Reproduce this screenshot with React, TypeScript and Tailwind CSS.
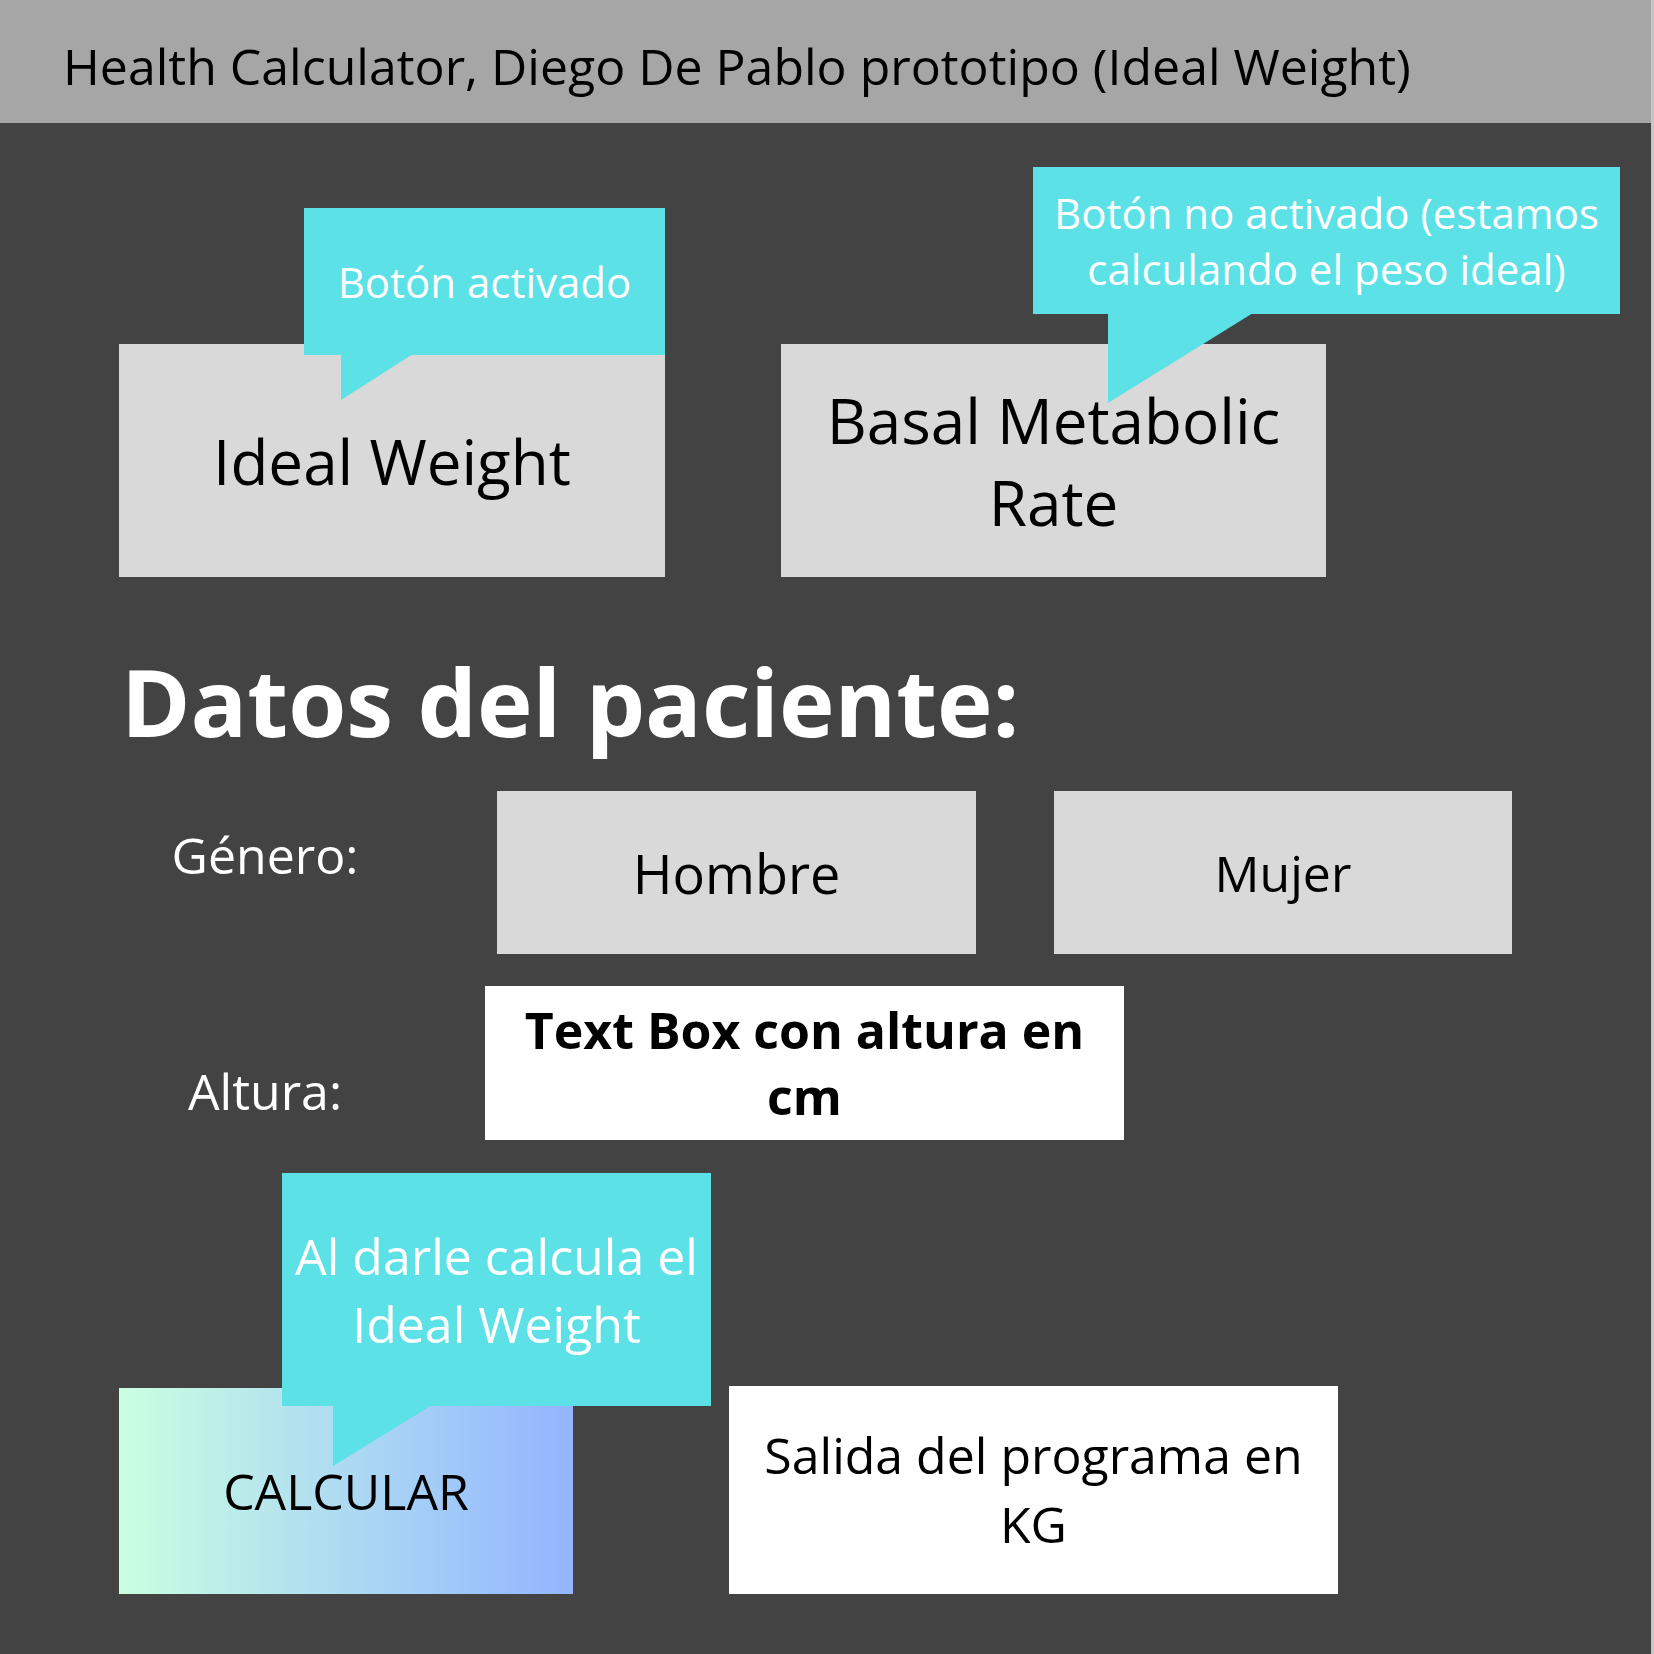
import React from "react";

function Callout({
  className,
  tail,
  w,
  h,
  children,
}: {
  className: string;
  tail: string;
  w: number;
  h: number;
  children: React.ReactNode;
}) {
  return (
    <div className={"absolute " + className}>
      <div className="relative w-full h-full bg-[#5ce1e6] flex items-center justify-center text-center text-white">
        {children}
        <svg
          className="absolute left-0 top-0 overflow-visible pointer-events-none"
          width={w}
          height={h}
        >
          <polygon points={tail} fill="#5ce1e6" />
        </svg>
      </div>
    </div>
  );
}

export default function App() {
  return (
    <div className="relative w-[1654px] h-[1654px] bg-[#434343] overflow-hidden border-r-[3px] border-[#c6c6c6] font-['Open_Sans',sans-serif] text-black">
      {/* header */}
      <div className="h-[123px] bg-[#a6a6a6] flex items-center pl-[63px] pt-[8px]">
        <span className="text-[50px] leading-none">
          Health Calculator, Diego De Pablo prototipo (Ideal Weight)
        </span>
      </div>

      <div className="pl-[119px]">
        {/* calculator selector */}
        <div className="flex gap-[116px] mt-[221px]">
          <div className="w-[546px] h-[233px] bg-[#d9d9d9] flex items-center justify-center text-[62px] leading-none">
            Ideal Weight
          </div>
          <div className="w-[545px] h-[233px] bg-[#d9d9d9] flex items-center justify-center text-center text-[62px] leading-[82px]">
            Basal Metabolic
            <br />
            Rate
          </div>
        </div>

        {/* heading */}
        <h1 className="mt-[77px] ml-[2px] text-[94px] leading-none font-bold text-white">
          Datos del paciente:
        </h1>

        {/* gender */}
        <div className="flex mt-[43px]">
          <div className="w-[292px] text-center text-white text-[50px] leading-none pt-[39px]">
            Género:
          </div>
          <div className="ml-[86px] w-[479px] h-[163px] bg-[#d9d9d9] flex items-center justify-center text-[54px] leading-none">
            Hombre
          </div>
          <div className="ml-[78px] w-[458px] h-[163px] bg-[#d9d9d9] flex items-center justify-center text-[50px] leading-none">
            Mujer
          </div>
        </div>

        {/* height */}
        <div className="flex mt-[32px]">
          <div className="w-[292px] text-center text-white text-[50px] leading-none pt-[80px]">
            Altura:
          </div>
          <div className="ml-[74px] w-[639px] h-[154px] bg-white flex items-center justify-center text-center font-bold text-[50px] leading-[66px]">
            Text Box con altura en
            <br />
            cm
          </div>
        </div>

        {/* calculate + output */}
        <div className="flex items-end gap-[156px] mt-[246px]">
          <div className="w-[454px] h-[206px] bg-gradient-to-r from-[#cbffe0] to-[#93b4ff] flex items-center justify-center text-[50px] leading-none">
            CALCULAR
          </div>
          <div className="w-[609px] h-[208px] bg-white flex items-center justify-center text-center text-[50px] leading-[69px]">
            Salida del programa en
            <br />
            KG
          </div>
        </div>
      </div>

      {/* callouts */}
      <Callout
        className="left-[304px] top-[208px] w-[361px] h-[147px]"
        w={361}
        h={147}
        tail="37,146 109,146 37,192"
      >
        <span className="text-[42px] leading-none">Botón activado</span>
      </Callout>
      <Callout
        className="left-[1033px] top-[167px] w-[587px] h-[147px]"
        w={587}
        h={147}
        tail="75,146 220,146 75,236"
      >
        <span className="text-[42px] leading-[56px]">
          Botón no activado (estamos
          <br />
          calculando el peso ideal)
        </span>
      </Callout>
      <Callout
        className="left-[282px] top-[1173px] w-[429px] h-[233px]"
        w={429}
        h={233}
        tail="51,232 150,232 51,293"
      >
        <span className="text-[50px] leading-[68px]">
          Al darle calcula el
          <br />
          Ideal Weight
        </span>
      </Callout>
    </div>
  );
}
